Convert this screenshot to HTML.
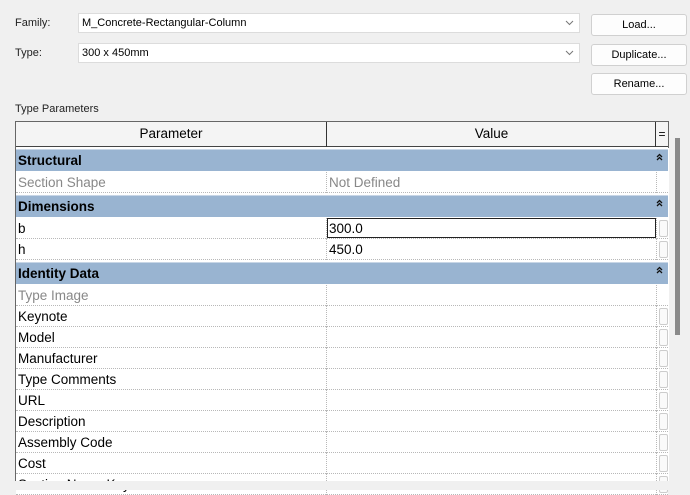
<!DOCTYPE html>
<html><head><meta charset="utf-8"><style>
*{margin:0;padding:0;box-sizing:border-box}
body{width:690px;height:490px;background:#f0f0f0;font-family:"Liberation Sans",sans-serif;position:relative;overflow:hidden;color:#000}
.a{position:absolute}
.lbl{font-size:11px;color:#222}
.combo{background:#fff;border:1px solid #dcdcdc;font-size:11px;padding:3px 0 0 3px;height:20px}
.combo svg{position:absolute;right:5px;top:6px}
.btn{background:#fdfdfd;border:1px solid #d0d0d0;border-radius:3px;font-size:11px;text-align:center;line-height:20px;width:96px;height:22px;left:591px}
.row{position:absolute;left:16px;width:640px;height:21px;background:#fff;font-size:13.5px;line-height:21px;border-bottom:1px dotted #b8b8b8}
.row .p{position:absolute;left:2px;top:0}
.row .v{position:absolute;left:313px;top:0}
.row .d{position:absolute;left:310px;top:0;width:0;height:21px;border-left:1px dotted #b8b8b8}
.grp{position:absolute;left:16px;width:652px;height:22px;background:#99b4d1;font-weight:bold;font-size:13.5px;line-height:22px;padding-left:2px;border-top:1px solid #c8d6e6}
.grp svg{position:absolute;right:5px;top:3px}
.sm{position:absolute;left:656px;width:12px;height:21px;background:#fff;border-bottom:1px dotted #b8b8b8;border-left:1px dotted #b8b8b8}
.sm b{position:absolute;left:2px;top:2px;width:9px;height:17px;border:1px solid #ccc;border-radius:2px;background:#fafafa}
.gr{color:#888}
</style></head><body>
<div class="a lbl" style="left:15px;top:17px">Family:</div>
<div class="a lbl" style="left:15px;top:47px">Type:</div>
<div class="a combo" style="left:78px;top:13px;width:502px">M_Concrete-Rectangular-Column<svg width="9" height="6"><path d="M1 1l3.5 3.5L8 1" stroke="#777" fill="none"/></svg></div>
<div class="a combo" style="left:78px;top:43px;width:502px">300 x 450mm<svg width="9" height="6"><path d="M1 1l3.5 3.5L8 1" stroke="#777" fill="none"/></svg></div>
<div class="a btn" style="top:14px">Load...</div>
<div class="a btn" style="top:44px">Duplicate...</div>
<div class="a btn" style="top:73px">Rename...</div>
<div class="a lbl" style="left:15px;top:103px">Type Parameters</div>

<div class="a" style="left:15px;top:121px;width:654px;height:361px;background:#fff;border-left:1px solid #666;border-top:1px solid #666"></div>
<div class="a" style="left:16px;top:122px;width:652px;height:25px;background:#f4f4f4;border-bottom:1px solid #444"></div>
<div class="a" style="left:16px;top:122px;width:310px;height:25px;font-size:13.5px;text-align:center;line-height:24px">Parameter</div>
<div class="a" style="left:326px;top:122px;width:1px;height:25px;background:#333"></div>
<div class="a" style="left:327px;top:122px;width:329px;height:25px;font-size:13.5px;text-align:center;line-height:24px">Value</div>
<div class="a" style="left:655px;top:122px;width:1px;height:25px;background:#333"></div>
<div class="a" style="left:656px;top:122px;width:12px;height:25px;font-size:12px;text-align:center;line-height:24px">=</div>
<div class="a" style="left:668px;top:121px;width:1px;height:27px;background:#666"></div>

<div class="grp" style="top:149px">Structural<svg width="7" height="8"><path d="M1 4l2.5-2.5L6 4M1 7l2.5-2.5L6 7" stroke="#111" stroke-width="1.3" fill="none"/></svg></div>
<div class="row gr" style="top:172px"><span class="p">Section Shape</span><span class="d"></span><span class="v">Not Defined</span></div>
<div class="sm" style="top:172px"></div>
<div class="grp" style="top:195px">Dimensions<svg width="7" height="8"><path d="M1 4l2.5-2.5L6 4M1 7l2.5-2.5L6 7" stroke="#111" stroke-width="1.3" fill="none"/></svg></div>
<div class="row" style="top:218px"><span class="p">b</span><span class="d"></span><span class="v" style="left:311px;width:329px;height:20px;line-height:19px;border:1px solid #222;padding-left:1px">300.0</span></div>
<div class="sm" style="top:218px"><b></b></div>
<div class="row" style="top:239px"><span class="p">h</span><span class="d"></span><span class="v">450.0</span></div>
<div class="sm" style="top:239px"><b></b></div>
<div class="grp" style="top:262px">Identity Data<svg width="7" height="8"><path d="M1 4l2.5-2.5L6 4M1 7l2.5-2.5L6 7" stroke="#111" stroke-width="1.3" fill="none"/></svg></div>
<div class="row gr" style="top:285px"><span class="p">Type Image</span><span class="d"></span></div>
<div class="sm" style="top:285px"></div>
<div class="row" style="top:306px"><span class="p">Keynote</span><span class="d"></span></div><div class="sm" style="top:306px"><b></b></div>
<div class="row" style="top:327px"><span class="p">Model</span><span class="d"></span></div><div class="sm" style="top:327px"><b></b></div>
<div class="row" style="top:348px"><span class="p">Manufacturer</span><span class="d"></span></div><div class="sm" style="top:348px"><b></b></div>
<div class="row" style="top:369px"><span class="p">Type Comments</span><span class="d"></span></div><div class="sm" style="top:369px"><b></b></div>
<div class="row" style="top:390px"><span class="p">URL</span><span class="d"></span></div><div class="sm" style="top:390px"><b></b></div>
<div class="row" style="top:411px"><span class="p">Description</span><span class="d"></span></div><div class="sm" style="top:411px"><b></b></div>
<div class="row" style="top:432px"><span class="p">Assembly Code</span><span class="d"></span></div><div class="sm" style="top:432px"><b></b></div>
<div class="row" style="top:453px"><span class="p">Cost</span><span class="d"></span></div><div class="sm" style="top:453px"><b></b></div>
<div class="row" style="top:474px"><span class="p">Section Name Key</span><span class="d"></span></div><div class="sm" style="top:474px"><b></b></div>
<div class="a" style="left:0;top:481px;width:690px;height:9px;background:#f0f0f0"></div>
<div class="a" style="left:15px;top:474px;width:1px;height:7px;background:#666"></div>
<div class="a" style="left:669px;top:121px;width:21px;height:361px;background:#f0f0f0"></div>
<div class="a" style="left:675px;top:138px;width:5px;height:197px;background:#8a8a8a"></div>
</body></html>
